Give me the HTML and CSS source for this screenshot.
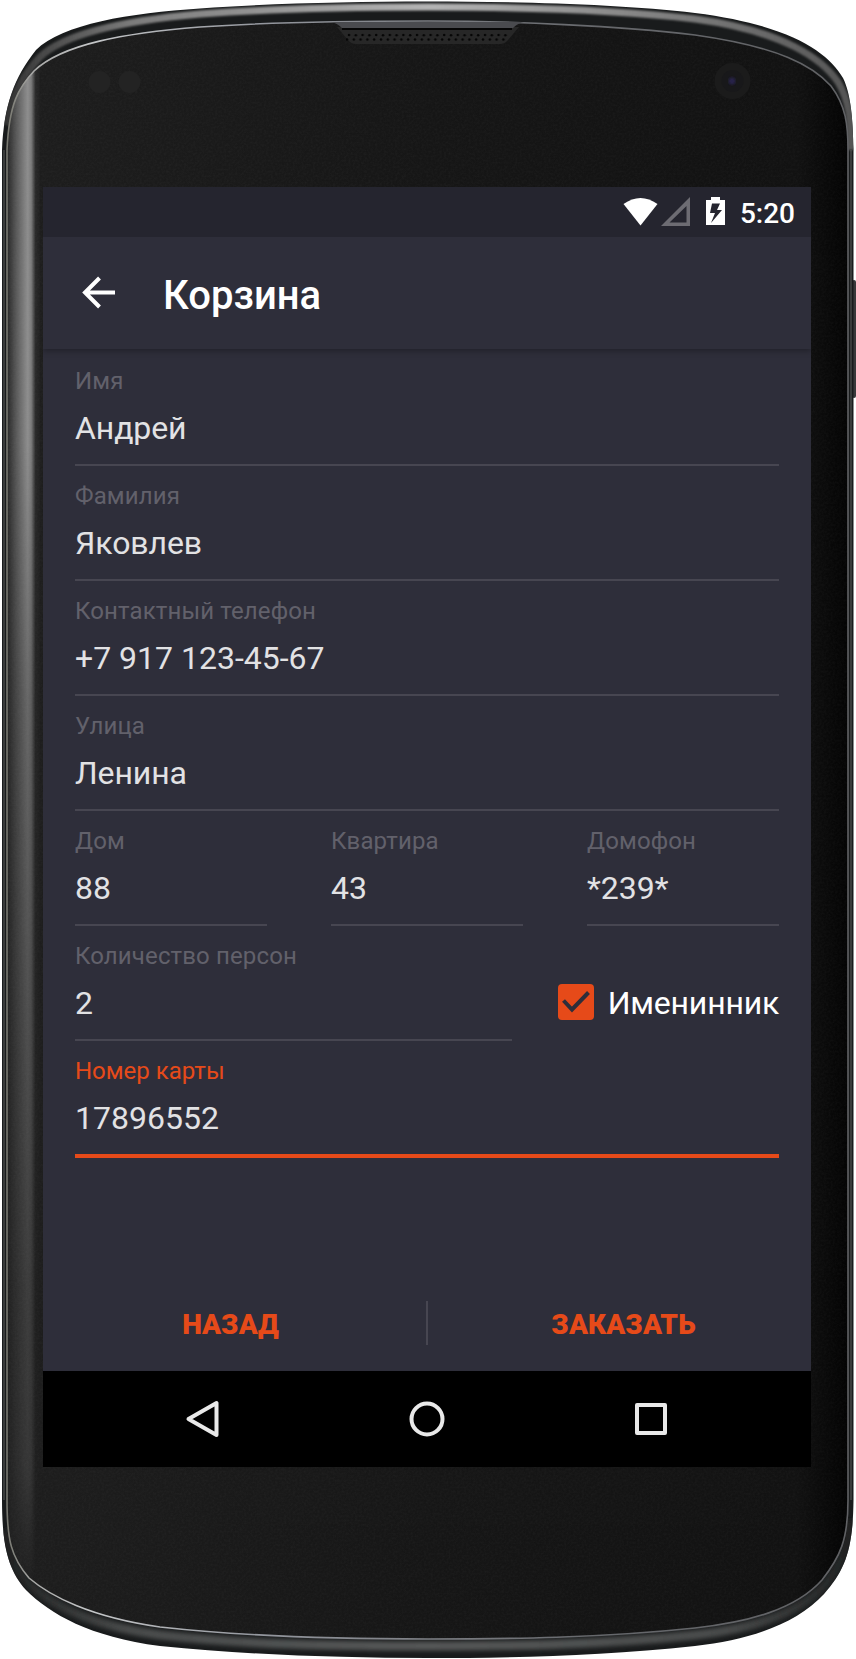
FILE: index.html
```html
<!DOCTYPE html>
<html lang="ru">
<head>
<meta charset="utf-8">
<title>Корзина</title>
<link rel="stylesheet" href="styles.css">
</head>
<body>
<div class="phone">
  <svg class="phone-body" width="856" height="1659" viewBox="0 0 856 1659" aria-hidden="true">
    <defs>
      <linearGradient id="face" x1="0" y1="0" x2="1" y2="0">
        <stop offset="0" stop-color="#1e1e1e"/><stop offset=".5" stop-color="#161616"/>
        <stop offset=".93" stop-color="#121212"/><stop offset=".98" stop-color="#060606"/><stop offset="1" stop-color="#000"/>
      </linearGradient>
      <linearGradient id="shine" x1="0" y1="0" x2="1" y2="0">
        <stop offset="0" stop-color="#fff" stop-opacity=".02"/><stop offset=".3" stop-color="#fff" stop-opacity=".27"/>
        <stop offset=".62" stop-color="#fff" stop-opacity=".5"/><stop offset=".72" stop-color="#fff" stop-opacity=".42"/>
        <stop offset=".84" stop-color="#fff" stop-opacity=".06"/><stop offset="1" stop-color="#fff" stop-opacity="0"/>
      </linearGradient>
      <linearGradient id="fade" x1="0" y1="0" x2="0" y2="1">
        <stop offset="0" stop-color="#fff"/><stop offset=".25" stop-color="#fff"/><stop offset=".42" stop-color="#a8a8a8"/>
        <stop offset=".6" stop-color="#777"/><stop offset=".8" stop-color="#484848"/><stop offset=".92" stop-color="#3a3a3a"/><stop offset="1" stop-color="#000"/>
      </linearGradient>
      <linearGradient id="edge" x1="0" y1="0" x2="1" y2="0">
        <stop offset="0" stop-color="#77776f"/><stop offset=".03" stop-color="#a8a8a6"/><stop offset=".1" stop-color="#c4c6c8"/><stop offset=".3" stop-color="#94979e"/>
        <stop offset=".7" stop-color="#66686c"/><stop offset="1" stop-color="#606164"/>
      </linearGradient>
      <linearGradient id="topband" x1="0" y1="0" x2="1" y2="0">
        <stop offset="0" stop-color="#333"/><stop offset=".15" stop-color="#7c7c7c"/><stop offset=".5" stop-color="#b4b4b4"/>
        <stop offset=".85" stop-color="#727272"/><stop offset="1" stop-color="#555"/>
      </linearGradient>
      <linearGradient id="bottomband" x1="0" y1="0" x2="1" y2="0">
        <stop offset="0" stop-color="#202222"/><stop offset=".15" stop-color="#4a4c4c"/><stop offset=".5" stop-color="#565858"/>
        <stop offset=".85" stop-color="#4a4c4c"/><stop offset="1" stop-color="#202222"/>
      </linearGradient>
      <mask id="shineMask"><rect x="0" y="60" width="60" height="1530" fill="url(#fade)"/></mask>
      <clipPath id="bodyClip"><path d="M2 150C4 105 14 78 36 50C62 24 130 13 200 8.500C270 3.500 350 1.500 428 1.500C510 1.500 620 4 695 13C790 25 828 52 843 78C851 94 853 120 853.500 150V1500C853 1550 845 1570 824 1594C796 1624 750 1640 695 1646C600 1656 510 1658 428 1658C340 1658 250 1655 160 1646C90 1637 50 1614 26 1590C8 1570 2 1545 2 1500Z"/></clipPath>
      <clipPath id="faceClip"><path d="M7 150C9 103 19 87 34 71C62 44 125 33 200 27C270 22 350 21 428 21C510 21 620 26 695 35C780 47 813 66 831 86C846 106 848 125 848 150V1500C848 1540 840 1557 822 1580C796 1609 750 1622 695 1628C600 1638 510 1639 428 1639C340 1639 250 1637 160 1627C90 1617 50 1596 29 1578C11 1557 7 1540 7 1500Z"/></clipPath>
      <filter id="soft" x="-5%" y="-50%" width="110%" height="200%"><feGaussianBlur stdDeviation="1.2"/></filter>
      <filter id="softer" x="-5%" y="-50%" width="110%" height="200%"><feGaussianBlur stdDeviation="2"/></filter>
      <filter id="grain"><feTurbulence type="fractalNoise" baseFrequency=".45" numOctaves="2"/><feColorMatrix values="0 0 0 0 .5  0 0 0 0 .5  0 0 0 0 .5  .35 0 0 0 -.1"/></filter>
      <pattern id="holes" width="13.6" height="9" patternUnits="userSpaceOnUse" x="344" y="33">
        <circle cx="5" cy="2" r="1.300" fill="#050505"/><circle cx="11.800" cy="2.200" r="1.300" fill="#050505"/>
        <circle cx="3" cy="6.500" r="1.300" fill="#050505"/><circle cx="9.800" cy="6.500" r="1.300" fill="#050505"/>
      </pattern>
    </defs>
    <rect x="852" y="280" width="4" height="118" rx="2" fill="#38393a"/>
    <path fill="#191b1c" d="M2 150C4 105 14 78 36 50C62 24 130 13 200 8.500C270 3.500 350 1.500 428 1.500C510 1.500 620 4 695 13C790 25 828 52 843 78C851 94 853 120 853.500 150V1500C853 1550 845 1570 824 1594C796 1624 750 1640 695 1646C600 1656 510 1658 428 1658C340 1658 250 1655 160 1646C90 1637 50 1614 26 1590C8 1570 2 1545 2 1500Z"/>
    <g clip-path="url(#bodyClip)">
      <path fill="none" stroke="url(#topband)" stroke-width="7" filter="url(#soft)" d="M6 125C14 88 26 72 40 57C66 32 130 20 200 14C270 9 350 7 428 7C510 7 620 10 695 19C785 31 823 60 838 82C849 100 851 120 851 150"/>
      <path fill="none" stroke="url(#bottomband)" stroke-width="9" filter="url(#softer)" d="M5 1530C9 1558 18 1572 28 1583C52 1606 92 1626 160 1635C250 1645 340 1646 428 1646C510 1646 600 1645 695 1635C750 1629 796 1615 822 1588C840 1568 848 1550 850 1520"/>
    </g>
    <path fill="none" stroke="#5a5d5b" d="M4 150V1500M851 150V1500"/>
    <g clip-path="url(#faceClip)">
      <rect width="856" height="1659" fill="url(#face)"/>
      <rect x="6" y="60" width="35" height="1530" fill="url(#shine)" mask="url(#shineMask)"/>
      <rect width="856" height="1659" filter="url(#grain)" opacity=".2"/>
      <g fill="#232323"><circle cx="99.500" cy="82" r="11"/><circle cx="129.500" cy="82" r="11"/></g>
      <circle cx="732.500" cy="81" r="18" fill="#1b1b1b"/><circle cx="732.500" cy="81" r="11" fill="#18181a"/><circle cx="732" cy="81" r="3.500" fill="#25224a" filter="url(#soft)"/>
    </g>
    <path fill="none" stroke="url(#edge)" stroke-width="1.600" d="M7 150C9 103 19 87 34 71C62 44 125 33 200 27C270 22 350 21 428 21C510 21 620 26 695 35C780 47 813 66 831 86C846 106 848 125 848 150V1500C848 1540 840 1557 822 1580C796 1609 750 1622 695 1628C600 1638 510 1639 428 1639C340 1639 250 1637 160 1627C90 1617 50 1596 29 1578C11 1557 7 1540 7 1500Z"/>
    <path fill="#272727" d="M337 27H519L508 40Q505 44 500 44H356Q351 44 348 40Z"/>
    <rect x="346" y="33" width="162" height="9" fill="url(#holes)"/>
    <path fill="#4a4b4f" d="M331 22H524Q518 23 513 28H342Q337 23 331 22Z"/>
    <path stroke="#060606" stroke-width="2" d="M342 29H512"/>
  </svg>

  <main class="screen">
    <div class="status-bar">
      <svg class="status-icons" width="104" height="32" viewBox="0 0 104 32" aria-hidden="true">
        <path fill="#fff" d="M0.500 7Q17.500-5 34.500 7L17.500 28.500Z"/>
        <path fill="#6d6c73" fill-rule="evenodd" d="M67 0V29H38ZM63.500 9L46.500 25.500H63.500Z"/>
        <path fill="#fff" fill-rule="evenodd" d="M88 0H97V3H102V28H83V3H88ZM89 6.500L87 16H92L88 26L99 13H94L97 6.500Z"/>
      </svg>
      <span class="clock">5:20</span>
    </div>
    <header class="app-bar">
      <svg class="back" width="34" height="34" viewBox="0 0 34 34" fill="none" stroke="#fff" stroke-width="4" aria-hidden="true"><path d="M17.500 2L3 16.500L17.500 31M3 16.500H33"/></svg>
      <h1 class="title">Корзина</h1>
    </header>
    <form class="form">
      <div class="field"><label class="label">Имя</label><span class="value">Андрей</span></div>
      <div class="field"><label class="label">Фамилия</label><span class="value">Яковлев</span></div>
      <div class="field"><label class="label">Контактный телефон</label><span class="value value-number">+7 917 123-45-67</span></div>
      <div class="field"><label class="label">Улица</label><span class="value">Ленина</span></div>
      <div class="row row-address">
        <div class="field"><label class="label">Дом</label><span class="value value-number">88</span></div>
        <div class="field"><label class="label">Квартира</label><span class="value value-number">43</span></div>
        <div class="field"><label class="label">Домофон</label><span class="value value-number">*239*</span></div>
      </div>
      <div class="row row-persons">
        <div class="field"><label class="label">Количество персон</label><span class="value value-number">2</span></div>
        <div class="check">
          <svg width="36" height="36" viewBox="0 0 36 36" aria-hidden="true"><rect width="36" height="36" rx="4" fill="#e64a19"/><path d="M5.500 16.500L14 25.500L30.500 8.500" fill="none" stroke="#2e2e3a" stroke-width="4"/></svg>
          <span class="check-label">Именинник</span>
        </div>
      </div>
      <div class="field field-active"><label class="label">Номер карты</label><span class="value value-number">17896552</span></div>
    </form>
    <footer class="actions">
      <span class="action action-back">НАЗАД</span>
      <span class="divider"></span>
      <span class="action action-order">ЗАКАЗАТЬ</span>
    </footer>
    <nav class="nav-bar">
      <svg width="36" height="40" viewBox="0 0 36 40" fill="none" stroke="#e9e9e9" stroke-width="4" stroke-linejoin="round"><path d="M3.500 20L31.500 4V36Z"/></svg>
      <svg width="36" height="40" viewBox="0 0 36 40" fill="none" stroke="#e9e9e9" stroke-width="4"><circle cx="18" cy="20" r="15.500"/></svg>
      <svg width="36" height="40" viewBox="0 0 36 40" fill="none" stroke="#e9e9e9" stroke-width="4" stroke-linejoin="round"><rect x="4" y="6" width="28" height="28"/></svg>
    </nav>
  </main>
</div>
</body>
</html>
```
FILE: styles.css
```css
* { box-sizing: border-box; }
body { margin: 0; background: #fff; font-family: Roboto, "Noto Sans", sans-serif; }
.phone { display: grid; width: 856px; height: 1659px; overflow: hidden; }
.phone-body, .screen { grid-area: 1 / 1; }
.screen {
  z-index: 1;
  display: flex;
  flex-direction: column;
  width: 768px;
  height: 1280px;
  margin: 187px 0 0 43px;
  background: #2e2e3a;
  color: #fff;
}
.status-bar {
  display: flex;
  justify-content: flex-end;
  align-items: center;
  gap: 13px;
  height: 50px;
  padding: 2px 16px 0 0;
  background: #25252f;
}
.clock { font-size: 28px; line-height: 32px; font-weight: 500; padding-top: 2px; }
.app-bar {
  display: flex;
  align-items: center;
  gap: 47px;
  height: 112px;
  padding-left: 39px;
  box-shadow: 0 2px 6px rgba(0, 0, 0, .3);
  clip-path: inset(0 0 -12px 0);
}
.title { margin: 0; padding-top: 6px; font-size: 40px; line-height: 48px; font-weight: 500; }
.form { display: flex; flex-direction: column; padding: 2px 32px 0; }
.field {
  display: flex;
  flex-direction: column;
  height: 115px;
  padding-top: 16px;
  border-bottom: 2px solid #474651;
}
.label { color: #62616b; font-size: 24px; line-height: 28px; letter-spacing: .13px; }
.value { margin-top: 14px; color: #e2e2e4; font-size: 32px; line-height: 38px; letter-spacing: -.1px; }
.value-number { letter-spacing: 0; }
.field-active { height: 117px; border-bottom: 4px solid #e64a19; }
.field-active .label { color: #e64a19; letter-spacing: 0; }
.row { display: flex; }
.row-address { gap: 64px; }
.row-address .field { flex: 1; }
.row-persons { justify-content: space-between; }
.row-persons .field { width: 437px; }
.check { display: flex; align-items: center; gap: 14px; height: 36px; margin-top: 58px; font-size: 32px; line-height: 38px; }
.check-label { padding-top: 2px; letter-spacing: -.2px; }
.actions {
  display: flex;
  align-items: center;
  height: 96px;
  margin-top: auto;
  color: #e64a19;
  font-size: 28px;
  font-weight: 900;
}
.action { flex: 1; padding-top: 2px; text-align: center; }
.action-back { padding-right: 8px; }
.action-order { padding-left: 8px; }
.divider { width: 2px; height: 44px; background: #474651; }
.nav-bar {
  display: flex;
  justify-content: center;
  align-items: center;
  gap: 188px;
  height: 96px;
  background: #000;
}
```
